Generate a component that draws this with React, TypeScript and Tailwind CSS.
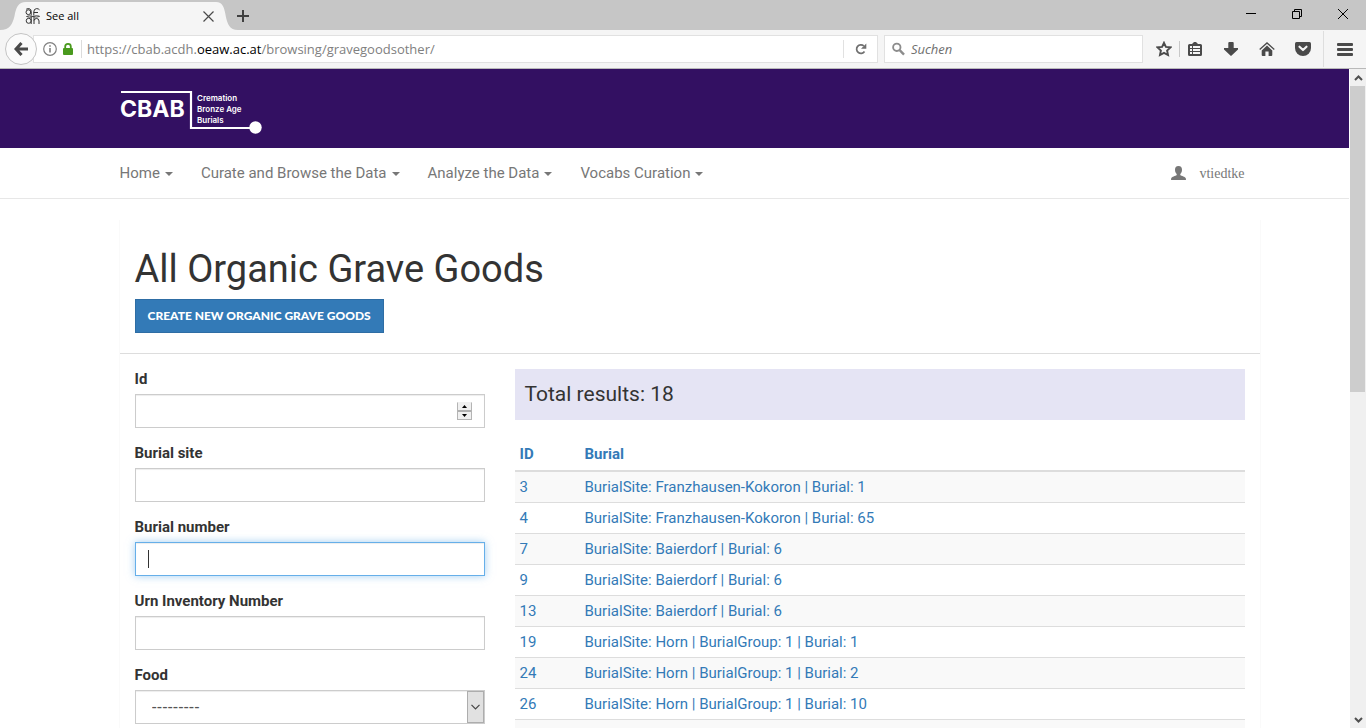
import type { ReactNode } from "react";

const navItems = ["Home", "Curate and Browse the Data", "Analyze the Data", "Vocabs Curation"];

const rows: [number, string][] = [
  [3, "BurialSite: Franzhausen-Kokoron | Burial: 1"],
  [4, "BurialSite: Franzhausen-Kokoron | Burial: 65"],
  [7, "BurialSite: Baierdorf | Burial: 6"],
  [9, "BurialSite: Baierdorf | Burial: 6"],
  [13, "BurialSite: Baierdorf | Burial: 6"],
  [19, "BurialSite: Horn | BurialGroup: 1 | Burial: 1"],
  [24, "BurialSite: Horn | BurialGroup: 1 | Burial: 2"],
  [26, "BurialSite: Horn | BurialGroup: 1 | Burial: 10"],
  [27, "BurialSite: Horn | BurialGroup: 1 | Burial: 11"],
];

function IconButton({ label, children }: { label: string; children: ReactNode }) {
  return (
    <button type="button" aria-label={label} className="flex h-7 w-9 items-center justify-center text-[#4a4a4a]">
      {children}
    </button>
  );
}

function TabStrip() {
  return (
    <div className="flex h-[30px] shrink-0 items-end justify-between bg-[#c6c6c6]">
      <div className="flex items-end">
        <svg width="26" height="28" viewBox="0 0 26 28" aria-hidden="true">
          <path d="M0 28 C10 28 12.500 22 14.500 14 C16 6 18 0 26 0 V28 Z" fill="#f5f5f5" />
        </svg>
        <div className="flex h-7 w-[190px] items-center bg-[#f5f5f5]">
          <svg width="16" height="17" viewBox="0 0 16 17" fill="none" stroke="#333" className="-ml-px" aria-hidden="true">
            <path d="M5.800 4.200 A2.400 2.400 0 1 0 3.400 6.600 Q5.800 6.600 5.800 4 M1.200 1.200 Q3 .3 4.800 .9 Q6.200 1.500 6.200 3.500 V7.500" />
            <path d="M14.500 1.800 Q13.500 .6 11.500 .6 Q8.800 .8 8.800 4 V7.500 M8.800 4.500 H13" />
            <path d="M1.500 8.500 Q4 7 8 8.500 Q12 10 15 8.200 M1.500 8.500 Q4 10 8 8.500 Q11 7.200 14 8" strokeWidth=".8" />
            <path d="M6.200 9 V16 M6.200 12.800 A2.500 2.500 0 1 0 1.200 12.800 A2.500 2.500 0 1 0 6.200 12.800" />
            <path d="M9 9 V16 M9 12.500 Q9.500 10.500 11.500 10.500 Q14 10.500 14 13 V16" />
          </svg>
          <span className="ml-[5px] flex-1 font-['Open_Sans',sans-serif] text-[11px] text-black">See all</span>
          <button type="button" aria-label="Close tab" className="flex size-4 items-center justify-center">
            <svg width="11" height="11" viewBox="0 0 11 11" stroke="#4a4a4a" strokeWidth="1.200" aria-hidden="true">
              <path d="M.5 .5 L10.500 10.500 M10.500 .5 L.5 10.500" />
            </svg>
          </button>
        </div>
        <svg width="22" height="28" viewBox="0 0 26 28" preserveAspectRatio="none" aria-hidden="true">
          <path d="M26 28 C16 28 13.500 22 11.500 14 C10 6 8 0 0 0 V28 Z" fill="#f5f5f5" />
        </svg>
        <button type="button" aria-label="New tab" className="-ml-px flex h-7 w-3 items-center justify-center">
          <svg width="12" height="12" viewBox="0 0 12 12" stroke="#404040" strokeWidth="2" className="shrink-0" aria-hidden="true">
            <path d="M6 0 V12 M0 6 H12" />
          </svg>
        </button>
      </div>
      <div className="flex h-[30px] text-black">
        <button type="button" aria-label="Minimize" className="flex w-[46px] items-center justify-center">
          <svg width="10" height="10" viewBox="0 0 10 10" stroke="currentColor" aria-hidden="true"><path d="M0 3.500 H10" /></svg>
        </button>
        <button type="button" aria-label="Restore" className="flex w-[46px] items-center justify-center pb-[2px]">
          <svg width="10" height="10" viewBox="0 0 10 10" fill="none" stroke="currentColor" aria-hidden="true"><path d="M.5 2.500 H7.500 V9.500 H.5 Z M2.500 2.500 V.5 H9.500 V7.500 H7.500" /></svg>
        </button>
        <button type="button" aria-label="Close window" className="flex w-[46px] items-center justify-center pb-[2px]">
          <svg width="10" height="10" viewBox="0 0 10 10" stroke="currentColor" aria-hidden="true"><path d="M0 0 L10 10 M10 0 L0 10" /></svg>
        </button>
      </div>
    </div>
  );
}

function Toolbar() {
  return (
    <div className="flex h-[39px] shrink-0 items-center border-b border-[#b9b9b9] bg-[#f5f5f5] font-['Open_Sans',sans-serif] text-[13px]">
      <button type="button" aria-label="Back" className="z-10 ml-[5px] flex size-8 shrink-0 items-center justify-center rounded-full border border-[#c4c4c4] bg-[#fbfbfb]">
        <svg width="14" height="14" viewBox="0 0 14 14" fill="none" stroke="#4a4a4a" strokeWidth="3" aria-hidden="true">
          <path d="M7.500 1 L2 7 L7.500 13 M2.500 7 H14" />
        </svg>
      </button>
      <div className="-ml-1 flex h-7 flex-1 items-center border border-[#e1e1e1] bg-white pl-[9px]">
        <svg width="14" height="14" viewBox="0 0 14 14" fill="none" stroke="#808080" aria-hidden="true">
          <circle cx="7" cy="7" r="6.300" strokeWidth="1.200" />
          <path d="M7 6 V10.500 M7 3.200 V4.800" strokeWidth="1.600" />
        </svg>
        <svg width="10" height="12" viewBox="0 0 10 12" className="ml-[6px]" aria-hidden="true">
          <rect y="5" width="10" height="7" rx="1" fill="#4a9a1e" />
          <path d="M2.200 6 V3.500 A2.800 2.600 0 0 1 7.800 3.500 V6" fill="none" stroke="#4a9a1e" strokeWidth="1.800" />
        </svg>
        <span className="ml-2 h-[18px] w-px bg-[#dcdcdc]" />
        <span className="ml-[5px] flex-1 whitespace-nowrap pt-[2px] text-[#808080]">
          https://cbab.acdh.<span className="text-black">oeaw.ac.at</span>/browsing/gravegoodsother/
        </span>
        <span className="h-[18px] w-px bg-[#e1e1e1]" />
        <button type="button" aria-label="Reload" className="flex w-[33px] items-center justify-center">
          <svg width="12" height="12" viewBox="0 0 12 12" aria-hidden="true">
            <path d="M9.500 8.500 A4.300 4.300 0 1 1 8.800 2.900" fill="none" stroke="#707070" strokeWidth="1.700" />
            <path d="M11.300 .5 V5.800 H6 Z" fill="#707070" />
          </svg>
        </button>
      </div>
      <div className="ml-[6px] flex h-7 w-[259px] items-center border border-[#e1e1e1] bg-white pl-[7px]">
        <svg width="14" height="14" viewBox="0 0 14 14" fill="none" stroke="#8c8c8c" aria-hidden="true">
          <circle cx="5.200" cy="5.200" r="4" strokeWidth="2" />
          <path d="M8.300 8.300 L13 13" strokeWidth="2.600" />
        </svg>
        <input aria-label="Suchen" placeholder="Suchen" className="ml-[6px] w-full bg-transparent pt-[2px] italic outline-none placeholder:text-[#6f6f6f]" />
      </div>
      <div className="ml-[3px] flex items-center">
        <IconButton label="Bookmark">
          <svg width="16" height="16" viewBox="0 0 16 16" fill="none" stroke="currentColor" strokeWidth="1.900" aria-hidden="true">
            <path d="M8 1.800 L9.900 5.900 L14.400 6.400 L11.100 9.500 L12 14 L8 11.800 L4 14 L4.900 9.500 L1.600 6.400 L6.100 5.900 Z" />
          </svg>
        </IconButton>
        <span className="-ml-[3px] h-4 w-px bg-[#c8c8c8]" />
        <div className="-ml-[3px] flex">
          <IconButton label="Bookmarks list">
            <svg width="14" height="15" viewBox="0 0 14 15" aria-hidden="true">
              <path d="M1.500 2 H4 L6 0 H8 L10 2 H12.500 Q14 2 14 3.500 V12.500 Q14 14 12.500 14 H1.500 Q0 14 0 12.500 V3.500 Q0 2 1.500 2 Z" fill="currentColor" />
              <path d="M2 5 H4 M5 5 H12 M2 8 H4 M5 8 H12 M2 11 H4 M5 11 H12" stroke="#f5f5f5" strokeWidth="1.800" />
            </svg>
          </IconButton>
          <IconButton label="Downloads">
            <svg width="14" height="14" viewBox="0 0 14 14" fill="currentColor" aria-hidden="true">
              <path d="M4.300 1 Q4.300 0 5.300 0 H8.700 Q9.700 0 9.700 1 V6 H14 V7.500 L7.600 13.600 Q7 14.200 6.400 13.600 L0 7.500 V6 H4.300 Z" />
            </svg>
          </IconButton>
          <IconButton label="Home page">
            <svg width="16" height="14" viewBox="0 0 16 14" fill="currentColor" aria-hidden="true">
              <path d="M8 3.600 L13.300 8.600 V13 Q13.300 14 12.300 14 H9.600 V9.500 H6.400 V14 H3.700 Q2.700 14 2.700 13 V8.600 Z" />
              <path d="M.7 7.500 L8 .9 L15.300 7.500" fill="none" stroke="currentColor" strokeWidth="1.300" />
            </svg>
          </IconButton>
          <IconButton label="Pocket">
            <svg width="16" height="14" viewBox="0 0 16 14" aria-hidden="true">
              <path d="M1.500 0 H14.500 Q16 0 16 1.500 V6 A8 8 0 0 1 0 6 V1.500 Q0 0 1.500 0 Z" fill="currentColor" />
              <path d="M4.500 4.700 L8 8 L11.500 4.700" fill="none" stroke="#f5f5f5" strokeWidth="2.200" strokeLinecap="round" strokeLinejoin="round" />
            </svg>
          </IconButton>
        </div>
        <span className="ml-[2px] h-9 w-px bg-[#dedede]" />
        <div className="ml-[3px] mr-[3px]">
          <IconButton label="Open menu">
            <svg width="16" height="13" viewBox="0 0 16 13" fill="currentColor" aria-hidden="true">
              <rect width="16" height="3" rx="1" />
              <rect y="5" width="16" height="3" rx="1" />
              <rect y="10" width="16" height="3" rx="1" />
            </svg>
          </IconButton>
        </div>
      </div>
    </div>
  );
}

function Caret() {
  return (
    <svg width="8" height="4" viewBox="0 0 8 4" fill="currentColor" className="mt-px" aria-hidden="true">
      <path d="M0 0 H8 L4 4 Z" />
    </svg>
  );
}

function Logo() {
  return (
    <a href="#" aria-label="CBAB">
      <svg width="144" height="46" viewBox="0 0 144 46" className="font-['Inter',sans-serif] font-bold" fill="#fff">
        <path d="M1 3 H71 V39 H136" fill="none" stroke="#fff" strokeWidth="2.200" />
        <circle cx="135.500" cy="38.500" r="6.200" />
        <text x="0" y="28" fontSize="23">CBAB</text>
        <text x="77" y="12" fontSize="8" fontWeight="600">Cremation</text>
        <text x="77" y="23" fontSize="8" fontWeight="600">Bronze Age</text>
        <text x="77" y="34" fontSize="8" fontWeight="600">Burials</text>
      </svg>
    </a>
  );
}

function Field({ id, label, children }: { id: string; label: string; children: ReactNode }) {
  return (
    <div className="mb-[15px]">
      <label htmlFor={id} className="mb-[5px] block font-bold">{label}</label>
      {children}
    </div>
  );
}

const control = "h-[34px] w-full border border-[#ccc] bg-white px-3 shadow-[inset_0_1px_1px_rgba(0,0,0,0.075)] outline-none";

function Filters() {
  return (
    <form className="w-1/3 px-[15px]">
      <Field id="id" label="Id">
        <div className="flex h-[34px] items-center border border-[#ccc] bg-white px-3 shadow-[inset_0_1px_1px_rgba(0,0,0,0.075)]">
          <input id="id" type="text" inputMode="numeric" className="min-w-0 flex-1 outline-none" />
          <div className="flex h-[18px] w-[15px] flex-col border border-t-[#f0f0f0] border-[#b4b4b4] bg-[#f0f0f0]">
            <button type="button" aria-label="Increase" className="flex flex-1 items-center justify-center border-b-2 border-[#b0b0b0]">
              <svg width="5" height="3" viewBox="0 0 5 3" aria-hidden="true"><path d="M0 3 L2.500 0 L5 3 Z" /></svg>
            </button>
            <button type="button" aria-label="Decrease" className="flex flex-1 items-center justify-center">
              <svg width="5" height="3" viewBox="0 0 5 3" aria-hidden="true"><path d="M0 0 L2.500 3 L5 0 Z" /></svg>
            </button>
          </div>
        </div>
      </Field>
      <Field id="site" label="Burial site">
        <input id="site" type="text" className={control} />
      </Field>
      <Field id="number" label="Burial number">
        <div className="flex h-[34px] items-center border border-[#66afe9] bg-white px-3 shadow-[inset_0_1px_1px_rgba(0,0,0,0.075),0_0_8px_rgba(102,175,233,0.6)]">
          <span className="h-[18px] w-px bg-[#333]" />
          <input id="number" type="text" className="min-w-0 flex-1 outline-none" />
        </div>
      </Field>
      <Field id="urn" label="Urn Inventory Number">
        <input id="urn" type="text" className={control} />
      </Field>
      <Field id="food" label="Food">
        <div className="relative">
          <select id="food" className="h-[34px] w-full appearance-none border border-[#ccc] bg-white px-4 font-['Liberation_Sans',sans-serif] text-[16px] text-[#555] shadow-[inset_0_1px_1px_rgba(0,0,0,0.075)] outline-none">
            <option>---------</option>
          </select>
          <span className="pointer-events-none absolute inset-y-px right-px flex w-[17px] items-center justify-center border border-[#adadad] bg-[#e1e1e1]">
            <svg width="9" height="6" viewBox="0 0 9 6" fill="none" stroke="#444" strokeWidth="1.200" aria-hidden="true"><path d="M.5 .8 L4.500 4.800 L8.500 .8" /></svg>
          </span>
        </div>
      </Field>
    </form>
  );
}

function Results() {
  return (
    <section className="w-2/3 px-[15px]">
      <h3 className="flex h-[51px] items-center bg-[#e5e4f4] px-[10px] pb-[2px] text-[21px]">Total results: 18</h3>
      <table className="mt-5 w-full border-separate border-spacing-0 text-left text-[#337ab7]">
        <thead>
          <tr>
            <th className="w-[65px] border-b-2 border-[#ddd] px-[5px] pt-1 pb-[6px] leading-5"><a href="#">ID</a></th>
            <th className="border-b-2 border-[#ddd] px-[5px] pt-1 pb-[6px] leading-5"><a href="#">Burial</a></th>
          </tr>
        </thead>
        <tbody>
          {rows.map(([id, text]) => (
            <tr key={id} className="odd:bg-[#f9f9f9]">
              <td className="border-b border-[#ddd] p-[5px] leading-5"><a href="#">{id}</a></td>
              <td className="border-b border-[#ddd] p-[5px] leading-5"><a href="#">{text}</a></td>
            </tr>
          ))}
        </tbody>
      </table>
    </section>
  );
}

export default function App() {
  return (
    <div className="flex h-screen flex-col overflow-hidden">
      <TabStrip />
      <Toolbar />
      <div className="flex min-h-0 flex-1">
        <div className="min-w-0 flex-1 overflow-hidden bg-white font-['Roboto',sans-serif] text-[15px] leading-5 text-[#333]">
          <header className="bg-[#331062]">
            <div className="mx-auto flex h-[79px] max-w-[1170px] items-center pt-[6px] pl-[30px]">
              <Logo />
            </div>
          </header>
          <div className="border-b border-[#e7e7e7]">
            <div className="mx-auto flex h-[50px] max-w-[1170px] items-center justify-between px-[15px] text-[#777]">
              <nav className="flex gap-7 pl-[15px]">
                {navItems.map((item) => (
                  <button key={item} type="button" className="flex items-center gap-[5px]">
                    {item}
                    <Caret />
                  </button>
                ))}
              </nav>
              <a href="#" className="flex items-center gap-[13px] font-['Liberation_Serif',serif] text-[14px]">
                <svg width="15" height="14" viewBox="0 0 15 14" fill="currentColor" aria-hidden="true">
                  <path d="M7.500 0 C10 0 11 1.600 11 3.800 C11 5.800 10.200 7.200 9.300 8 V9 C10.500 10.200 14.200 10.600 14.800 12.300 L15 14 H0 L.2 12.300 C.8 10.600 4.500 10.200 5.700 9 V8 C4.800 7.200 4 5.800 4 3.800 C4 1.600 5 0 7.500 0 Z" />
                </svg>
                <span className="pt-[2px]">vtiedtke</span>
              </a>
            </div>
          </div>
          <main className="mx-auto mt-[21px] max-w-[1170px] pl-[30px]">
            <div className="shadow-[-1px_0_0_#fafafa,1px_0_0_#fafafa]">
              <div className="border-b border-[#ddd] px-[15px] pt-7 pb-5">
                <h1 className="text-[38px] leading-[42px]">All Organic Grave Goods</h1>
                <button type="button" className="mt-[9px] block h-[34px] border border-[#2e6da4] bg-[#337ab7] px-3 font-['Lato',sans-serif] text-[12px] font-black text-white">
                  CREATE NEW ORGANIC GRAVE GOODS
                </button>
              </div>
              <div className="flex pt-[15px]">
                <Filters />
                <Results />
              </div>
            </div>
          </main>
        </div>
        <div className="flex w-[17px] shrink-0 flex-col border-l border-white bg-[#f0f0f0]" aria-hidden="true">
          <div className="flex h-[17px] shrink-0 items-center justify-center">
            <svg width="9" height="6" viewBox="0 0 9 6" fill="none" stroke="#505050" strokeWidth="2"><path d="M1 5 L4.500 1.500 L8 5" /></svg>
          </div>
          <div className="min-h-0 flex-1">
            <div className="h-[49%] w-[15px] bg-[#cdcdcd]" />
          </div>
          <div className="flex h-[17px] shrink-0 items-center justify-center">
            <svg width="9" height="6" viewBox="0 0 9 6" fill="none" stroke="#505050" strokeWidth="2"><path d="M1 1 L4.500 4.500 L8 1" /></svg>
          </div>
        </div>
      </div>
    </div>
  );
}
